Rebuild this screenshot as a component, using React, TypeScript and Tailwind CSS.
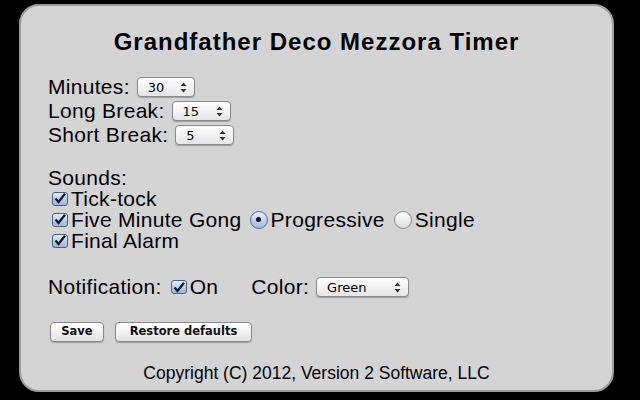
import React from "react";

const lab = "font-['Liberation_Sans',Arial,sans-serif] text-[21px] tracking-[0.3px] text-black";
const ui = "font-['DejaVu_Sans','Liberation_Sans',sans-serif] text-[13px] text-black";

function Arrows() {
  return (
    <svg width="7" height="11" viewBox="0 0 7 11">
      <path d="M3.5 0.5 L6.5 4 L0.5 4 Z" fill="#333" />
      <path d="M3.5 10.5 L6.5 7 L0.5 7 Z" fill="#333" />
    </svg>
  );
}

function Select({ value, w }: { value: string; w: string }) {
  return (
    <div
      className={`${w} ${ui} ml-[7px] flex h-[20px] items-center justify-between rounded-[4px] border border-[#8a8a8a] bg-gradient-to-b from-white to-[#e6e6e6] pl-[10px] pr-[7px] shadow-[0_1px_1px_rgba(0,0,0,0.25)]`}
    >
      <span className="leading-none">{value}</span>
      <Arrows />
    </div>
  );
}

function Check() {
  return (
    <span className="mr-[3px] inline-flex h-[14px] w-[16px] shrink-0 items-center justify-center rounded-[3px] border border-[#4f6086] bg-gradient-to-b from-[#e4ecf8] to-[#9db4dc]">
      <svg width="12" height="11" viewBox="0 0 12 11">
        <path d="M1.5 5.5 L4.5 9 L11 0.8" fill="none" stroke="#101828" strokeWidth="2.2" />
      </svg>
    </span>
  );
}

function Radio({ on }: { on?: boolean }) {
  return on ? (
    <span className="mr-[3px] inline-flex h-[18px] w-[18px] shrink-0 items-center justify-center rounded-full border border-[#5a6b92] bg-gradient-to-b from-[#eaf1fb] to-[#9fb8e2]">
      <span className="h-[5px] w-[5px] rounded-full bg-[#111]" />
    </span>
  ) : (
    <span className="mr-[3px] inline-flex h-[18px] w-[18px] shrink-0 rounded-full border border-[#8c8c8c] bg-gradient-to-b from-white to-[#dcdcdc]" />
  );
}

function Button({ children, w }: { children: React.ReactNode; w: string }) {
  return (
    <div
      className={`${w} flex h-[20px] items-center justify-center rounded-[4px] border border-[#8a8a8a] bg-gradient-to-b from-white to-[#e4e4e4] font-['DejaVu_Sans','Liberation_Sans',sans-serif] text-[11.5px] font-bold text-[#111] shadow-[0_1px_1px_rgba(0,0,0,0.25)]`}
    >
      {children}
    </div>
  );
}

export default function App() {
  return (
    <div className="h-[400px] w-[640px] overflow-hidden bg-black pl-[19px] pt-[4px]">
      <div className="flex h-[388px] w-[595px] flex-col rounded-[20px] border-2 border-[#9c9c9c] bg-[#d4d4d4] pl-[27px] pt-[22px]">
        <div className="flex h-[28px] items-center justify-center pr-[27px] font-['Liberation_Sans',Arial,sans-serif] text-[24px] font-bold tracking-[1px] text-black">
          Grandfather Deco Mezzora Timer
        </div>

        <div className="mt-[19px] flex flex-col">
          <div className="flex h-[24px] items-center">
            <span className={lab}>Minutes:</span>
            <Select value="30" w="w-[58px]" />
          </div>
          <div className="flex h-[24px] items-center">
            <span className={lab}>Long Break:</span>
            <Select value="15" w="w-[59px]" />
          </div>
          <div className="flex h-[24px] items-center">
            <span className={lab}>Short Break:</span>
            <Select value="5" w="w-[59px]" />
          </div>
        </div>

        <div className="mt-[20px] flex flex-col">
          <div className="flex h-[21px] items-center">
            <span className={lab}>Sounds:</span>
          </div>
          <div className="flex h-[21px] items-center pl-[4px]">
            <Check />
            <span className={lab}>Tick-tock</span>
          </div>
          <div className="flex h-[21px] items-center pl-[4px]">
            <Check />
            <span className={lab}>Five Minute Gong</span>
            <span className="ml-[8px]" />
            <Radio on />
            <span className={lab}>Progressive</span>
            <span className="ml-[9px]" />
            <Radio />
            <span className={lab}>Single</span>
          </div>
          <div className="flex h-[21px] items-center pl-[4px]">
            <Check />
            <span className={lab}>Final Alarm</span>
          </div>
        </div>

        <div className="mt-[24px] flex h-[24px] items-center">
          <span className={lab}>Notification:</span>
          <span className="ml-[9px]" />
          <Check />
          <span className={lab}>On</span>
          <span className={`${lab} ml-[33px]`}>Color:</span>
          <Select value="Green" w="w-[93px]" />
        </div>

        <div className="mt-[23px] flex items-center gap-[11px] pl-[2px]">
          <Button w="w-[54px]">Save</Button>
          <Button w="w-[137px]">Restore defaults</Button>
        </div>

        <div className="mt-[21px] flex h-[20px] items-center justify-center pr-[27px] font-['Liberation_Sans',Arial,sans-serif] text-[17.5px] text-black">
          Copyright (C) 2012, Version 2 Software, LLC
        </div>
      </div>
    </div>
  );
}
